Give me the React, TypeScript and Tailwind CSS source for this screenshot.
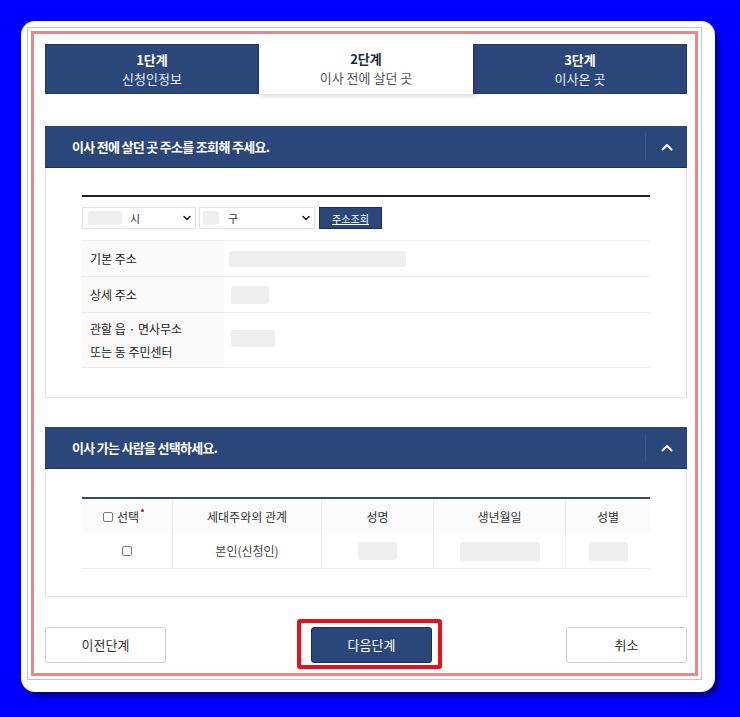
import React from "react";

const navy = "bg-[#2b4679]";

function ChevronUp() {
    return (
        <svg width="12" height="8" viewBox="0 0 12 8" fill="none">
            <polyline points="1.5,6.5 6,2 10.5,6.5" stroke="#fff" strokeWidth="2" strokeLinecap="round" strokeLinejoin="round" />
        </svg>
    );
}

function ChevronDown() {
    return (
        <svg width="8" height="6" viewBox="0 0 8 6" fill="none">
            <polyline points="1,1.5 4,4.5 7,1.5" stroke="#222" strokeWidth="1.6" strokeLinecap="round" strokeLinejoin="round" />
        </svg>
    );
}

function Blur({ w, h = "h-[17px]" }: { w: string; h?: string }) {
    return <span className={`block ${w} ${h} rounded-[3px] bg-[#efefef]`} />;
}

function Check() {
    return <span className="inline-block h-[10px] w-[10px] rounded-[2px] border border-[#7a7a7a] bg-white" />;
}

function SectionHeader({ title }: { title: string }) {
    return (
        <div className={`flex h-[42px] items-center border-b border-[#1f355f] ${navy}`}>
            <div className="flex-1 pl-[27px] text-[13px] font-bold tracking-[-0.7px] text-white">{title}</div>
            <div className="flex h-[28px] w-[42px] items-center justify-center border-l border-[#3a5487]">
                <ChevronUp />
            </div>
        </div>
    );
}

function StepTab({ num, label, active }: { num: string; label: string; active?: boolean }) {
    if (active) {
        return (
            <div className="relative z-10 -mt-[2px] flex h-[52px] w-[214px] flex-col items-center justify-center bg-white shadow-[2px_3px_5px_rgba(0,0,0,0.12)]">
                <span className="block text-[13px] font-bold leading-[19px] text-[#1d2a44]">{num}</span>
                <span className="block text-[13px] leading-[19px] text-[#555]">{label}</span>
            </div>
        );
    }
    return (
        <div className={`flex w-[214px] flex-col items-center justify-center border border-[#22385f] text-white ${navy}`}>
            <span className="block text-[13px] font-bold leading-[19px]">{num}</span>
            <span className="block text-[13px] leading-[19px] text-[#e6ebf3]">{label}</span>
        </div>
    );
}

export default function App() {
    return (
        <div className="h-[717px] w-[740px] bg-[#0000ff] pl-[21px] pt-[21px] font-['Noto_Sans_CJK_KR','Noto_Sans',sans-serif]">
            <div className="h-[671px] w-[694px] rounded-[14px] bg-white pl-[6px] pt-[6px] shadow-[4px_5px_3px_rgba(0,0,0,0.4)]">
                <div className="h-[653px] w-[675px] border border-[#c4c4c4] p-[3px]">
                    <div className="h-full w-full border-[3px] border-[#e98888] pl-[11px] pt-[10px]">
                        <div className="w-[642px]">
                            {/* Step tabs */}
                            <div className="flex h-[50px]">
                                <StepTab num="1단계" label="신청인정보" />
                                <StepTab num="2단계" label="이사 전에 살던 곳" active />
                                <StepTab num="3단계" label="이사온 곳" />
                            </div>

                            {/* Section 1 */}
                            <div className="mt-[32px]">
                                <SectionHeader title="이사 전에 살던 곳 주소를 조회해 주세요." />
                                <div className="border border-t-0 border-[#e3e3e3] px-[36px] pb-[29px] pt-[27px]">
                                    <div className="h-[2px] bg-[#222]" />
                                    <div className="mt-[10px] flex h-[22px] items-stretch">
                                        <div className="flex w-[114px] items-center border border-[#e2e2e2] bg-white pl-[5px] pr-[4px]">
                                            <Blur w="w-[34px]" h="h-[14px]" />
                                            <span className="ml-[8px] text-[11px] text-[#333]">시</span>
                                            <span className="ml-auto"><ChevronDown /></span>
                                        </div>
                                        <div className="ml-[3px] flex w-[116px] items-center border border-[#e2e2e2] bg-white pl-[3px] pr-[4px]">
                                            <Blur w="w-[16px]" h="h-[14px]" />
                                            <span className="ml-[9px] text-[11px] text-[#333]">구</span>
                                            <span className="ml-auto"><ChevronDown /></span>
                                        </div>
                                        <button className={`ml-[4px] w-[63px] border border-[#1b2e52] text-[10px] text-white underline ${navy}`}>주소조회</button>
                                    </div>
                                    <div className="mt-[11px] border-t border-[#f0f0f0]">
                                        <div className="grid h-[36px] grid-cols-[142px_1fr] border-b border-[#ededed]">
                                            <div className="flex items-center bg-[#fafafa] pl-[8px] text-[12px] text-[#222]">기본 주소</div>
                                            <div className="flex items-center pl-[5px]"><Blur w="w-[177px]" h="h-[16px]" /></div>
                                        </div>
                                        <div className="grid h-[36px] grid-cols-[142px_1fr] border-b border-[#ededed]">
                                            <div className="flex items-center bg-[#fafafa] pl-[8px] text-[12px] text-[#222]">상세 주소</div>
                                            <div className="flex items-center pl-[7px]"><Blur w="w-[38px]" h="h-[18px]" /></div>
                                        </div>
                                        <div className="grid h-[55px] grid-cols-[142px_1fr] border-b border-[#ededed]">
                                            <div className="flex flex-col justify-center bg-[#fafafa] pl-[8px] text-[12px] leading-[23px] text-[#222]">
                                                <span>관할 읍 · 면사무소</span>
                                                <span>또는 동 주민센터</span>
                                            </div>
                                            <div className="flex items-center pb-[3px] pl-[7px]"><Blur w="w-[44px]" h="h-[17px]" /></div>
                                        </div>
                                    </div>
                                </div>
                            </div>

                            {/* Section 2 */}
                            <div className="mt-[29px]">
                                <SectionHeader title="이사 가는 사람을 선택하세요." />
                                <div className="border border-t-0 border-[#e3e3e3] px-[36px] pb-[27px] pt-[28px]">
                                    <div className="h-[2px] bg-[#36486b]" />
                                    <div className="grid h-[35px] grid-cols-[91px_149px_112px_132px_1fr] bg-[#fbfbfb] text-[12px] text-[#333]">
                                        <div className="flex items-center gap-[4px] border-r border-[#eeeeee] pl-[21px]">
                                            <Check />
                                            <span className="relative">
                                                선택
                                                <span className="absolute -right-[5px] top-[1px] h-[3px] w-[3px] rounded-full bg-[#d0112b]" />
                                            </span>
                                        </div>
                                        <div className="flex items-center justify-center border-r border-[#eeeeee]">세대주와의 관계</div>
                                        <div className="flex items-center justify-center border-r border-[#eeeeee]">성명</div>
                                        <div className="flex items-center justify-center border-r border-[#eeeeee]">생년월일</div>
                                        <div className="flex items-center justify-center">성별</div>
                                    </div>
                                    <div className="grid h-[35px] grid-cols-[91px_149px_112px_132px_1fr] border-b border-[#ececec] text-[12px] text-[#444]">
                                        <div className="flex items-center justify-center border-r border-[#eeeeee]"><Check /></div>
                                        <div className="flex items-center justify-center border-r border-[#eeeeee]">본인(신청인)</div>
                                        <div className="flex items-center justify-center border-r border-[#eeeeee]"><Blur w="w-[39px]" h="h-[18px]" /></div>
                                        <div className="flex items-center justify-center border-r border-[#eeeeee]"><Blur w="w-[80px]" h="h-[19px]" /></div>
                                        <div className="flex items-center justify-center"><Blur w="w-[39px]" h="h-[19px]" /></div>
                                    </div>
                                </div>
                            </div>

                            {/* Buttons */}
                            <div className="mt-[30px] flex h-[36px]">
                                <button className="w-[121px] rounded-[3px] border border-[#cfcfcf] bg-white text-[13px] text-[#333]">이전단계</button>
                                <div className="relative ml-[145px] w-[121px]">
                                    <button className={`h-full w-full rounded-[3px] border border-[#1b2e52] text-[13px] text-white ${navy}`}>다음단계</button>
                                    <div className="absolute -left-[14px] -top-[8px] h-[50px] w-[145px] rounded-[3px] border-[4px] border-[#e8101a]" />
                                </div>
                                <button className="ml-auto w-[121px] rounded-[3px] border border-[#cfcfcf] bg-white text-[13px] text-[#333]">취소</button>
                            </div>
                        </div>
                    </div>
                </div>
            </div>
        </div>
    );
}
